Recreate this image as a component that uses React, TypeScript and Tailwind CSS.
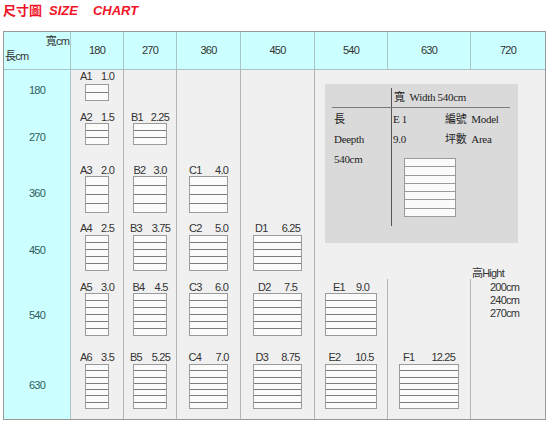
import clsx from "clsx"

type Item = [string, string, string] | null

// box width per size column (A..F)
const boxW = ["w-[24px]", "w-[34px]", "w-[39px]", "w-[49px]", "w-[52px]", "w-[60px]"]

const rows = [
    { size: "180", h: "h-[17px]", n: 2, gap: "mt-[2px]", pt: "" },
    { size: "270", h: "h-[22px]", n: 3, gap: "", pt: "" },
    { size: "360", h: "h-[37px]", n: 4, gap: "", pt: "" },
    { size: "450", h: "h-[36px]", n: 5, gap: "mt-px", pt: "" },
    { size: "540", h: "h-[43px]", n: 6, gap: "", pt: "pt-[2px]" },
    { size: "630", h: "h-[45px]", n: 7, gap: "mt-px", pt: "" },
]

const cols: Item[][] = [
    [["A1", "1.0", "w-[34px]"], ["A2", "1.5", "w-[34px]"], ["A3", "2.0", "w-[34px]"], ["A4", "2.5", "w-[34px]"], ["A5", "3.0", "w-[34px]"], ["A6", "3.5", "w-[34px]"]],
    [null, ["B1", "2.25", "w-[38px]"], ["B2", "3.0", "w-[33px]"], ["B3", "3.75", "w-[40px]"], ["B4", "4.5", "w-[35px]"], ["B5", "5.25", "w-[40px]"]],
    [null, null, ["C1", "4.0", "w-[39px]"], ["C2", "5.0", "w-[39px]"], ["C3", "6.0", "w-[39px]"], ["C4", "7.0", "w-[40px]"]],
    [null, null, null, ["D1", "6.25", "w-[45px]"], ["D2", "7.5", "w-[39px]"], ["D3", "8.75", "w-[44px]"]],
    [null, null, null, null, ["E1", "9.0", "w-[36px]"], ["E2", "10.5", "w-[45px]"]],
    [null, null, null, null, null, ["F1", "12.25", "w-[52px]"]],
]

const heads = ["180", "270", "360", "450", "540", "630", "720"]

function Plan({ w, h, n, line = "divide-[#7c7c7c]" }: { w: string; h: string; n: number; line?: string }) {
    return (
        <div className={clsx("flex flex-col divide-y border border-[#9a9a9a] bg-[#fbfbfb]", line, w, h)}>
            {Array.from({ length: n }).map((_, i) => (
                <div key={i} className="flex-1" />
            ))}
        </div>
    )
}

function Cell({ item, c, r }: { item: Item; c: number; r: number }) {
    const row = rows[r]
    return (
        <div className={clsx("flex flex-col items-center border-r border-[#b4b4b4] bg-[#f0f0f0]", row.pt)}>
            {item && (
                <>
                    <div className={clsx("flex justify-between leading-[12px]", item[2])}>
                        <span>{item[0]}</span>
                        <span>{item[1]}</span>
                    </div>
                    <div className={row.gap}>
                        <Plan w={boxW[c]} h={row.h} n={row.n} />
                    </div>
                </>
            )}
        </div>
    )
}

function Legend() {
    return (
        <div className="h-[159px] w-[193px] bg-[#dadada] pt-[4px] font-['Liberation_Serif','Noto_Sans_CJK_TC',serif] text-[11px] tracking-[-0.3px] text-[#222]">
            <div className="flex h-[19px]">
                <div className="w-[66px]" />
                <div className="border-l border-[#555] pl-[2px] leading-[19px]">寬&nbsp; Width 540cm</div>
            </div>
            <div className="ml-[7px] h-px w-[178px] bg-[#7a7a7a]" />
            <div className="flex h-[118px]">
                <div className="w-[66px] pl-[9px] pt-px leading-[20px]">
                    <div>長</div>
                    <div>Deepth</div>
                    <div>540cm</div>
                </div>
                <div className="border-l border-[#555] pl-px pt-px">
                    <div className="grid grid-cols-[52px_auto] leading-[20px]">
                        <span>E 1</span>
                        <span>編號&nbsp; Model</span>
                        <span>9.0</span>
                        <span>坪數&nbsp; Area</span>
                    </div>
                    <div className="ml-[11px] mt-[9px]">
                        <Plan w="w-[52px]" h="h-[59px]" n={7} line="divide-[#999]" />
                    </div>
                </div>
            </div>
        </div>
    )
}

export default function App() {
    return (
        <div className="h-[427px] w-[550px] bg-white font-['Liberation_Sans','Noto_Sans_CJK_TC',sans-serif]">
            <div className="pl-[3px] pt-px text-[13px] font-bold leading-[17px] text-[#f01428]">
                <span className="font-['Noto_Sans_CJK_TC',sans-serif]">尺寸圖</span>
                <span className="ml-[7px] italic">SIZE</span>
                <span className="ml-[15px] italic">CHART</span>
            </div>

            <div className="ml-[3px] mt-[12px] w-[543px] border border-[#999] text-[11px] tracking-[-0.8px] text-[#333]">
                {/* header */}
                <div className="grid h-[38px] grid-cols-[67px_53px_53px_64px_74px_73px_83px_74px] border-b border-[#a8c4c4] bg-[#ccffff]">
                    <div className="flex flex-col border-r border-[#a8c4c4] pt-[3px] leading-[12px]">
                        <div className="self-end pr-px">寬cm</div>
                        <div className="mt-[3px] pl-px">長cm</div>
                    </div>
                    {heads.map((h, i) => (
                        <div
                            key={h}
                            className={clsx("flex items-center justify-center", i < 6 && "border-r border-[#a8c4c4]")}
                        >
                            {h}
                        </div>
                    ))}
                </div>

                {/* body */}
                <div className="grid grid-cols-[67px_53px_53px_64px_74px_73px_83px_74px] grid-rows-[41px_53px_58px_57px_72px_68px]">
                    <div className="col-span-3 col-start-6 row-span-4 row-start-1 flex flex-col bg-[#f0f0f0] pl-[10px] pt-[14px]">
                        <Legend />
                        <div className="mt-auto pl-[147px] leading-[12px]">
                            <span className="font-['Noto_Sans_CJK_TC',sans-serif]">高</span>Hight
                        </div>
                    </div>
                    <div className="col-start-8 row-span-2 row-start-5 bg-[#f0f0f0] pl-[19px] pt-[2px] leading-[13px]">
                        <div>200cm</div>
                        <div>240cm</div>
                        <div>270cm</div>
                    </div>

                    {rows.map((row, r) => (
                        <div key={row.size} className="contents">
                            <div className="flex items-center justify-center border-r border-[#a8c4c4] bg-[#ccffff] text-[#2f5d5d]">
                                {row.size}
                            </div>
                            {cols.slice(0, r >= 4 ? 6 : 4).map((col, c) => (
                                <Cell key={c} item={col[r]} c={c} r={r} />
                            ))}
                        </div>
                    ))}
                </div>
            </div>
        </div>
    )
}
